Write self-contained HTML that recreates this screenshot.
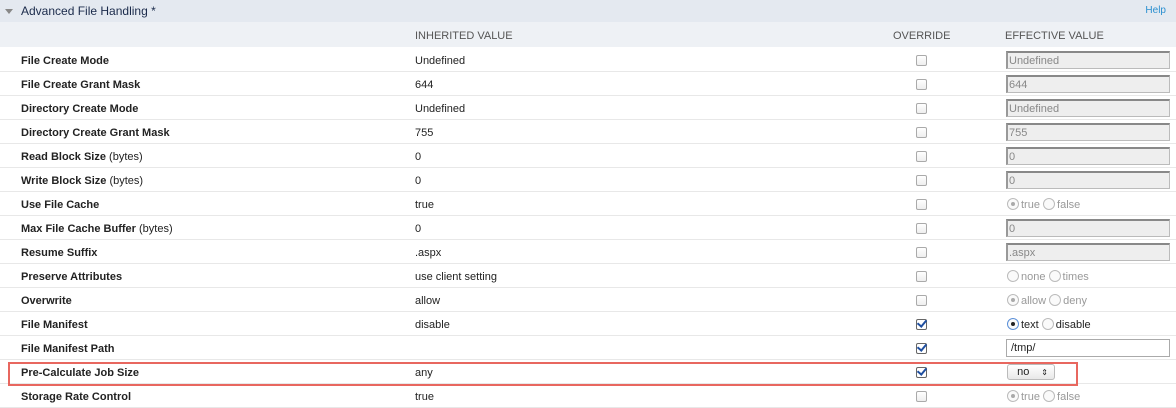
<!DOCTYPE html>
<html><head><style>
body{margin:0;width:1176px;height:405px;overflow:hidden;background:#fff;font-family:"Liberation Sans",Arial,sans-serif;font-size:11px;color:#222}
.top{position:absolute;left:0;top:0;width:1176px;height:22px;background:#e4e9f0}
.top .t{position:absolute;left:21px;top:4px;font-size:12px;color:#1a2a4a}
.top .tri{position:absolute;left:5px;top:9px;width:0;height:0;border-left:4px solid transparent;border-right:4px solid transparent;border-top:5px solid #888}
.top .help{position:absolute;right:10px;top:5px;color:#2a8fd0;font-size:10px}
.hd{position:absolute;left:0;top:22px;width:1176px;height:25px;background:#eef1f5;color:#555;font-size:11px}
.hd span{position:absolute;top:8px}
.row{position:absolute;left:0;width:1176px;height:23px;border-bottom:1px solid #e8e8e8}
.row .l{position:absolute;left:21px;top:7px;font-weight:bold;color:#222}
.row .l i{font-style:normal;font-weight:normal}
.row .v{position:absolute;left:415px;top:7px}
.cb{position:absolute;left:916px;top:7px;width:9px;height:9px;border:1px solid #aaa;border-radius:2px;background:linear-gradient(#fff,#eee)}
.cb.on{border-color:#666;background:#fff}
.cb.on:after{content:"";position:absolute;left:2px;top:-2px;width:4px;height:7px;border-right:2px solid #1f4fa0;border-bottom:2px solid #1f4fa0;transform:rotate(40deg)}
.in{position:absolute;left:1006px;top:3px;width:160px;height:15px;border:1px solid #bbb;border-top:2px solid #888;border-left:2px solid #999;background:#eee;color:#888;font-size:11px;line-height:16px;padding-left:1px}
.in.w{background:#fff;color:#222;border:1px solid #aaa;height:16px;line-height:17px;padding-left:4px;width:158px}
.rad{position:absolute;left:1007px;top:6px;color:#999;font-size:11px}
.rad.d{color:#222}
.r{display:inline-block;width:10px;height:10px;border:1px solid #bbb;border-radius:50%;vertical-align:-2px;position:relative;background:#fafafa;margin-right:2px}
.r.s:after{content:"";position:absolute;left:3px;top:3px;width:4px;height:4px;border-radius:50%;background:#aaa}
.r.b{border-color:#5a8fd8}
.r.b:after{content:"";position:absolute;left:3px;top:3px;width:4px;height:4px;border-radius:50%;background:#222}
.sel{position:absolute;left:1007px;top:4px;width:46px;height:14px;border:1px solid #bbb;border-radius:3px;background:linear-gradient(#fff,#e8e8e8);font-size:11px;line-height:15px}
.red{position:absolute;left:8px;top:362px;width:1066px;height:20px;border:2px solid #e8675f}
</style></head><body>
<div class="top"><div class="tri"></div><div class="t">Advanced File Handling *</div><div class="help">Help</div></div>
<div class="hd"><span style="left:415px">INHERITED VALUE</span><span style="left:893px">OVERRIDE</span><span style="left:1005px">EFFECTIVE VALUE</span></div>

<div class="row" style="top:48px"><div class="l">File Create Mode</div><div class="v">Undefined</div><div class="cb"></div><div class="in">Undefined</div></div>
<div class="row" style="top:72px"><div class="l">File Create Grant Mask</div><div class="v">644</div><div class="cb"></div><div class="in">644</div></div>
<div class="row" style="top:96px"><div class="l">Directory Create Mode</div><div class="v">Undefined</div><div class="cb"></div><div class="in">Undefined</div></div>
<div class="row" style="top:120px"><div class="l">Directory Create Grant Mask</div><div class="v">755</div><div class="cb"></div><div class="in">755</div></div>
<div class="row" style="top:144px"><div class="l">Read Block Size <i>(bytes)</i></div><div class="v">0</div><div class="cb"></div><div class="in">0</div></div>
<div class="row" style="top:168px"><div class="l">Write Block Size <i>(bytes)</i></div><div class="v">0</div><div class="cb"></div><div class="in">0</div></div>
<div class="row" style="top:192px"><div class="l">Use File Cache</div><div class="v">true</div><div class="cb"></div><div class="rad"><span class="r s"></span>true <span class="r"></span>false</div></div>
<div class="row" style="top:216px"><div class="l">Max File Cache Buffer <i>(bytes)</i></div><div class="v">0</div><div class="cb"></div><div class="in">0</div></div>
<div class="row" style="top:240px"><div class="l">Resume Suffix</div><div class="v">.aspx</div><div class="cb"></div><div class="in">.aspx</div></div>
<div class="row" style="top:264px"><div class="l">Preserve Attributes</div><div class="v">use client setting</div><div class="cb"></div><div class="rad"><span class="r"></span>none <span class="r"></span>times</div></div>
<div class="row" style="top:288px"><div class="l">Overwrite</div><div class="v">allow</div><div class="cb"></div><div class="rad"><span class="r s"></span>allow <span class="r"></span>deny</div></div>
<div class="row" style="top:312px"><div class="l">File Manifest</div><div class="v">disable</div><div class="cb on"></div><div class="rad d"><span class="r b"></span>text <span class="r"></span>disable</div></div>
<div class="row" style="top:336px"><div class="l">File Manifest Path</div><div class="cb on"></div><div class="in w">/tmp/</div></div>
<div class="row" style="top:360px"><div class="l">Pre-Calculate Job Size</div><div class="v">any</div><div class="cb on"></div><div class="sel">&nbsp;&nbsp;&nbsp;no<span style="position:absolute;right:6px;top:0;font-size:8px">&#8661;</span></div></div>
<div class="row" style="top:384px"><div class="l">Storage Rate Control</div><div class="v">true</div><div class="cb"></div><div class="rad"><span class="r s"></span>true <span class="r"></span>false</div></div>
<div class="red"></div>
</body></html>
